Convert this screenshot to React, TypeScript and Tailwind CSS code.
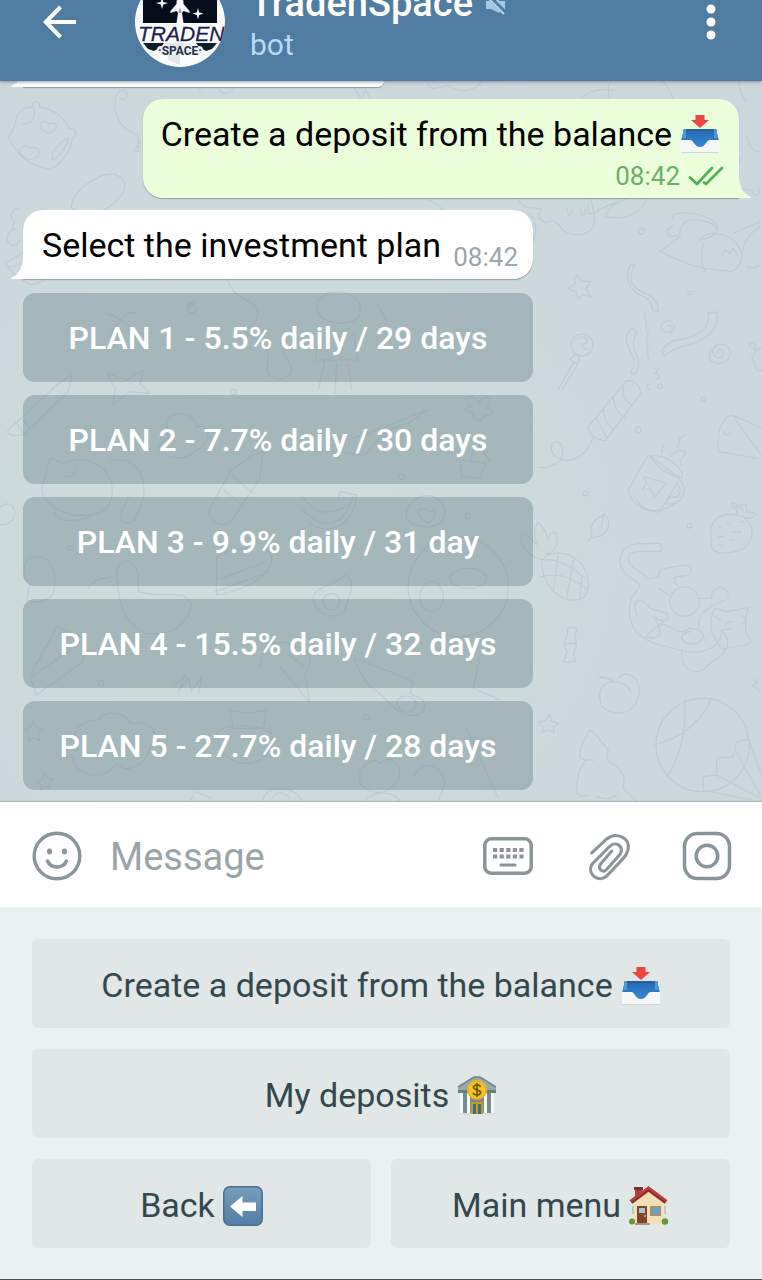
import type { ReactNode } from "react";

type IconProps = { className?: string };

function BackArrow() {
  return (
    <svg viewBox="0 0 34 34" className="size-[34px]" fill="none" stroke="#fff" strokeWidth="4">
      <path d="M33 17H3M17.500 2 2.800 17l14.700 15" />
    </svg>
  );
}

function Avatar() {
  return (
    <svg viewBox="0 0 90 90" className="size-[90px] shrink-0" role="img" aria-label="TradenSpace">
      <defs>
        <clipPath id="avatar-clip">
          <circle cx="45" cy="45" r="45" />
        </clipPath>
      </defs>
      <g clipPath="url(#avatar-clip)">
        <rect width="90" height="90" fill="#fbfdfd" />
        <rect x="8" y="0" width="74" height="46" fill="#060d1a" />
        <path d="M45 14c3 5 3.500 10 3.500 13l6 7v2l-6-2-1.500 2 1.500 10h-7l1.500-10-1.500-2-6 2v-2l6-7c0-3 .5-8 3.500-13z" fill="#f4f7fb" />
        <path d="M45 30l-1.500 6h3z" fill="#8d98a8" />
        <path d="M27 20l1.200 5 4.800 1-4.800 1.500-1.200 4.500-1.200-4.500-4.800-1.500 4.800-1zM63 31l1.200 4.500 4.300 1-4.300 1.500-1.200 4.500-1.200-4.500-4.300-1.500 4.300-1z" fill="#fff" />
        <path d="M8 66h21l-3 4-7 4-6-2zM61 66h21l-5 6-6 2-7-4z" fill="#0d2029" />
        <path d="M32 66h24l-11 4v18l-12-5z" fill="#e4e6ea" />
        <rect x="22" y="69" width="46" height="9" rx="4" fill="#eff1f4" />
        <text x="3" y="63.500" fontFamily="Liberation Sans, sans-serif" fontSize="21" fontStyle="italic" fill="#211d52" stroke="#211d52" strokeWidth=".3">
          TRADEN
        </text>
        <text x="45" y="78" textAnchor="middle" fontFamily="Roboto, sans-serif" fontWeight="700" fontSize="12" fill="#25304f">
          ·SPACE·
        </text>
      </g>
    </svg>
  );
}

function MutedIcon() {
  return (
    <svg viewBox="0 0 22 24" className="h-6 w-[22px]" aria-hidden="true">
      <path d="M1 9h5l8-7v7l6 0v8l-6 4-8-4H1z" fill="#a6c8e4" />
      <path d="M2 3l19 19" stroke="#4f7ca0" strokeWidth="5" />
      <path d="M3 6l16 16" stroke="#b5d5ee" strokeWidth="2" />
    </svg>
  );
}

function MenuDots() {
  return (
    <svg viewBox="0 0 10 36" className="h-9 w-[10px]" fill="#fff">
      <circle cx="5" cy="5" r="4.500" />
      <circle cx="5" cy="18" r="4.500" />
      <circle cx="5" cy="31" r="4.500" />
    </svg>
  );
}

function ChecksIcon() {
  return (
    <svg viewBox="0 0 36 20" className="h-5 w-9" fill="none" stroke="#52b152" strokeWidth="2.800" strokeLinecap="round" strokeLinejoin="round" aria-label="Read" role="img">
      <path d="M2 11.500l7 6.500L24 2M16 16.500l2 1.500L34 2" />
    </svg>
  );
}

function InboxEmoji({ className }: IconProps) {
  return (
    <svg viewBox="0 0 40 40" className={className} role="img" aria-label="Inbox tray">
      <defs>
        <linearGradient id="tray-blue" x1="0" y1="0" x2="0" y2="1">
          <stop offset="0" stopColor="#2368ae" />
          <stop offset="1" stopColor="#3b91dc" />
        </linearGradient>
      </defs>
      <path d="M4 15h32l3 12v9H1v-9z" fill="url(#tray-blue)" />
      <path d="M4 15h32l1 2H3z" fill="#265f9f" />
      <path d="M4 15h2v9H2zM36 15h-2v9h4z" fill="#5199d5" />
      <path d="M1 26h9c4 0 4 7 10 7s6-7 10-7h9v13H1z" fill="#f6f7f8" />
      <path d="M1 38.500h38" stroke="#cfd5da" />
      <path d="M15.500 1h9v5h4.500l-9 8-9-8h4.500z" fill="#ec4640" />
    </svg>
  );
}

function BankEmoji({ className }: IconProps) {
  return (
    <svg viewBox="0 0 40 40" className={className} role="img" aria-label="Bank">
      <path d="M3 15h34v23H3z" fill="#768c90" />
      <path d="M1 11 17 1h6l16 10v5H1z" fill="#98a9ac" />
      <path d="M1 11 17 1h6l16 10" fill="none" stroke="#728689" strokeWidth="1.500" />
      <path d="M1 14h38v3H1z" fill="#667d82" />
      <path d="M14 26h12v12H14z" fill="#c39b25" />
      <path d="M16 28h3v10h-3zM21 28h3v10h-3z" fill="#386e80" />
      <path d="M3 17h3v20H3zM10 17h3v20h-3zM27 17h3v20h-3zM34 17h3v20h-3z" fill="#f6f8f8" />
      <path d="M1 37h13v2H1zM26 37h13v2H26z" fill="#d9dfe0" />
      <circle cx="20" cy="14" r="10" fill="#f4c51f" />
      <circle cx="20" cy="14" r="9" fill="none" stroke="#dda91b" />
      <path d="M23.500 11c-1-3-7-2.500-7 .3 0 3.200 7.200 2 7.200 5.300 0 3-6.500 3.300-7.700.2M20 7v14" fill="none" stroke="#6c5710" strokeWidth="1.700" />
    </svg>
  );
}

function LeftEmoji({ className }: IconProps) {
  return (
    <svg viewBox="0 0 40 40" className={className} role="img" aria-label="Left arrow">
      <defs>
        <linearGradient id="key-blue" x1="0" y1="0" x2="0" y2="1">
          <stop offset="0" stopColor="#789dbb" />
          <stop offset="1" stopColor="#507fa6" />
        </linearGradient>
      </defs>
      <rect x=".8" y=".8" width="38.400" height="38.400" rx="6" fill="url(#key-blue)" stroke="#496f8e" strokeWidth="1.500" />
      <path d="M7 20.500 19.500 10v6.500H33v8.500H19.500V31z" fill="#fff" />
    </svg>
  );
}

function HouseEmoji({ className }: IconProps) {
  return (
    <svg viewBox="0 0 40 40" className={className} role="img" aria-label="House">
      <path d="M6 2h7v12H6z" fill="#a9443b" />
      <path d="M5 1h9v3H5z" fill="#7e302c" />
      <path d="M5 15 20 4l14 11v23H5z" fill="#f3dfb5" />
      <path d="M4 20v8M36 20v8" stroke="#a8c5c5" strokeWidth="1.500" />
      <path d="M2 16 19.500 3 37 16" fill="none" stroke="#7f2a2a" strokeWidth="4.500" />
      <path d="M2 15 19.500 2 37 15" fill="none" stroke="#c53d3b" strokeWidth="2.500" />
      <path d="M8 20h10v18H8z" fill="#80452f" />
      <path d="M10 22h6v5h-6z" fill="#a7c7d0" />
      <circle cx="16" cy="30" r="1" fill="#e6b850" />
      <path d="M21 20h11v10H21z" fill="#bd8b56" />
      <path d="M22.500 21.500h8v7h-8z" fill="#62a5d5" />
      <path d="M6 37h15v2H6z" fill="#a5958c" />
      <circle cx="3" cy="35.500" r="3" fill="#65963c" />
      <circle cx="36" cy="35.500" r="3.200" fill="#65963c" />
    </svg>
  );
}

function SmileIcon() {
  return (
    <svg viewBox="0 0 50 50" className="size-[50px]" fill="none" stroke="#8b9497" strokeWidth="3.500">
      <circle cx="25" cy="25" r="22.800" />
      <path d="M15.500 30c3.500 8 15.500 8 19 0" strokeLinecap="round" />
      <ellipse cx="17.500" cy="20.500" rx="2.600" ry="3" fill="#8b9497" stroke="none" />
      <ellipse cx="32.500" cy="20.500" rx="2.600" ry="3" fill="#8b9497" stroke="none" />
    </svg>
  );
}

function KeyboardIcon() {
  return (
    <svg viewBox="0 0 50 40" className="h-10 w-[50px]" fill="none" stroke="#8b9497">
      <rect x="1.800" y="2.800" width="46.400" height="34.400" rx="6.500" strokeWidth="3.500" />
      <path d="M10 14h31M10 20.500h31" strokeWidth="4.200" strokeDasharray="4.200 2.400" />
      <path d="M18 29h14" strokeWidth="3" strokeLinecap="round" />
    </svg>
  );
}

function ClipIcon() {
  return (
    <svg viewBox="0 0 44 50" className="h-[50px] w-11" fill="none" stroke="#8b9497" strokeWidth="3.200" strokeLinecap="round" strokeLinejoin="round">
      <path d="M4 21 20 6C29-1 45 4 42 18c-1 4-3 7-6 10L20 45C11 53-1 44 4 33L23 14c6-6 15 0 11 8L20 38c-4 5-10 0-7-5l12-14" transform="translate(1 2) scale(.95 .95)" />
    </svg>
  );
}

function CameraIcon() {
  return (
    <svg viewBox="0 0 50 50" className="size-[50px]" fill="none" stroke="#8b9497" strokeWidth="3.500">
      <rect x="2.500" y="2.500" width="45" height="45" rx="13" />
      <circle cx="25" cy="25" r="10.800" />
    </svg>
  );
}

/** Faint line drawings behind the conversation. */
function ChatWallpaper() {
  return (
    <svg
      viewBox="0 81 762 721"
      preserveAspectRatio="xMinYMin slice"
      className="absolute inset-0 size-full"
      fill="none"
      stroke="#bfcbd6"
      strokeWidth="3.500"
      strokeLinecap="round"
      strokeLinejoin="round"
      aria-hidden="true"
    >
      <g transform="translate(0 80) scale(.3333)">
        <path d="M25 170q20-20 25-60 20-35 50-28c-10-22 22-22 18-2 50 10 75 35 90 65 20 0 28 20 10 28-5 40-30 75-65 95-45-5-85-30-105-60-15-20-20-30-23-38z" />
        <path d="M145 160c-30-12-30-35-10-37 12 2 10 10 13 10 12-12 30 2 15 20zM85 240c-35-20-30-38-10-42 12 2 12 10 17 6 22-8 35 16 14 30zM65 130c30 5 40-10 38-45M155 240c0-30 25-55 50-65-10 35-25 55-50 65z" />
        <path d="M215 385c-5-30 30-70 75-90 60-35 110 10 70 55-35 45-90 65-145 35M345 80c0-25 5-50 25-50 20 10 10 35-8 25M345 80c5 50 35 75 70 85v50h-15l20-30" />
        <path d="M55 385c-30 10-25 30-10 40-15 20-5 25 8 25-20-5-45 20-25 40 20 20 35-10 28-12M600 35c-5-40 40-80 85-55 30 20 20 60-10 60-30-5-20-40 5-30M1060 20l25 40 12-30 20 35M1280-5c10 60 50 10 70 25 35 20 70 15 95-15M1830 60c-40-120 170-120 190 5M1740 60q35-40 100-30M2240 65c-30-30-30-100 0-105" />
        <path d="M2225 230c-10 35-30 45-35 50 12 5 18 20 20 60 15-10 35-20 48-5 10 20 25 10 20-10M2240 170q12 50 45 45" />
      </g>
      <g transform="translate(0 190) scale(.3333)">
        <path d="M15 220q80-40 135-115c60 55 60 150-55 180-35-15-65-40-80-65zM25 230q65 5 120-110" />
        <ellipse cx="113" cy="190" rx="9" ry="7" />
        <ellipse cx="155" cy="190" rx="9" ry="7" />
        <ellipse cx="88" cy="235" rx="10" ry="7" />
        <path d="M320 80c-5 70 15 110 65 135M335 95c20 60 130 80 160-15M385 165q45-15 85 0M495 80c70 30 80 95 55 130-30 30-70 15-60-15l10-40M795 105q20-15 60-20 20 15 40 20-15 20-45 15l-10 20-20-5 5-20q-20 0-30-10zM1010 105c0-40 110-40 115 35 40 10 10 40-20 30-15-10-30-40-15-40-20-20-50 10-80-25z" />
        <path d="M725 220c0-60 60-75 75-20-15 45-50 55-75 20zM700 240c-40 35 10 80 50 95 40 30 30 60-20 85 30 30 80 40 75 90-20 70 60 70 70 30 0-30-40-40-20-80M320 370c70 20 90 80 140 55M330 440c30-70 70-80 80-70M565 355c20-30 40 15 10 15-20-5-20-30 10-35M950 350c0-60 130-60 130 5 15 60-130 60-130-5zM960 430l-15 80h130l-15-80M975 510l-20 90m55-80-5 90m40-90 10 80M1130 340l30 50M1280 30c70 10 60 90 10 85-30-5-20-45 5-40" />
      </g>
      <g transform="translate(500 190) scale(.3333)">
        <path d="M55 28c15 35 50 20 70 30-15 20-15 30 15 40 20-12 40 5 45 20 35 25 80 20 95-10 10-25 0-45-10-85M200 55l8 25 10-22M240 55l8 25 10-22M265 40c-5 65 15 15 80 0 40-15 70-30 95-10-30 50-70 60-125 50 15-30 30-40 55-50M480 185l60-45c-5-45 25-60 80-45 60 20 15 50-20 55 20-35 95-20 115 20 20 20 10 60-20 75l-80-10c-60-10-100-35-135-50zM520 90c-20-40 130-20 133 25M520 105c-30 20-20 45 15 30M610 160q-10 50 5 85M665 200l10-20 15 10 10-15 15 25M700 130l80-35M730 180q0-35 50-70M740 230q30 10 35-5" />
        <path d="M230 252l15 22 28 0-15 23 15 22-25-5-13 14-8-23-25-10 23-12zM405 225c-20 35-20 60 20 80 35 15 48 25 50 60l-16-2c-5-35-20-40-45-52-40-25-35-55-22-88zM625 368l27-2c5 45-20 70-60 90-35 15-75 15-96 42l-12-13c15-30 40-35 76-40 50-15 70-35 65-77zM398 413l13 15c-25 35 0 60 5 90 0 30-10 35-20 35l-5-10c15-10 15-30 5-50-20-30-25-60 2-80zM437 368c-15 20 15 30 0 48 20 20-10 35 8 52-15 15 8 25-2 45M503 410c10-15 25 15 2 18-25 0-30-28-5-35 25-5 35 30 12 35M655 492c-10-20 20-20 15 5-15 20-50-10-20-32 50-15 60 55 0 55-30-5-30-40 0-50" />
        <circle cx="246" cy="465" r="33" />
        <path d="M225 450q20-15 35-5 10 15-15 18-5 12 20 14M228 492l10 8v15l-12 5-16-12zM222 515l-48 85M235 520l-50 80M265 710l115-138c25 0 40 15 43 38L315 753c-35-5-48-20-50-43zM290 685l30 57M310 655q0 40 32 65M340 620q0 40 35 65M370 590q-5 40 28 55M278 745c-35 100-145 70-120 15 30-25 50 55 0 65q-20 10-40 7M460 537h17l-12 15c20 0 15 15 5 15M452 583h-12l8 17h-10" />
        <circle cx="481" cy="589" r="7" />
        <circle cx="424" cy="124" r="9" />
        <circle cx="415" cy="720" r="9" />
        <circle cx="257" cy="910" r="7" />
        <circle cx="569" cy="309" r="6" />
        <circle cx="610" cy="628" r="7" />
        <path d="M445 795l95 70-60 100c-50 5-90-30-95-65zM450 798c60-10 110 55 95 65-50-10-75-35-95-65zM540 870c30 35 0 85-45 70l15-20c25 10 40-15 25-35M430 860l70 20-35 40-15-25-25 5 15-20zM510 800l25-20 20 5c5 20-25 20-10 40M555 735c-30 10-10 30-25 40M485 790l5-25M655 785c-5-80 20-110 45-108 50 20 100 40 130 80M655 785l120 20M700 680l110 150M670 725c5 15 20 10 25 0M765 465c-10-15-25 0-10 10 15 5 15 0 10-10zM760 500q0-20 25-25M755 500l15 40q25 5 30-15M695 940l8 18 12-15 15 20M0 80c35 10 30 50 0 50M85 70c45 40 20 100-50 190" />
      </g>
      <g transform="translate(500 500) scale(.3333)">
        <path d="M125 180c35-35 90-25 125 20 30 55 10 100-20 100-60 5-105-50-105-120zM125 180q60-10 130 55M125 230q70-20 138 40M175 165l-15 105M220 180l-20 115M245 230l-5 70M125 180c-65-20-70-75-60-80 15 0 30 15 45 35-10-35-5-60 5-65 15 10 25 25 27 50 10-25 25-35 30-5 0 30-20 50-35 45M263 122c15-10 15-15 10-30 0-25 20-40 40-48 25 20 10 55-15 65-15 5-25 0-35 13zM313 40l-10 45M632 100c0-30 20-65 75-55 60 10 60 70 25 100-40 20-90 20-97-5zM695 10c20 0 15 10 15 35 5-35 35-50 30-10 40 0 30 30-15 15" />
        <path d="M440 235c-10-25-55-25-55-60 0-20 25-25 95-20 10-10 5-25-5-25-65 0-110-5-115 50 0 45 35 50 60 75 0 10-15 20-25 40-20 65 5 120 85 140l60 15c30 10 65 10 100-10 20-10 25-30 25-50 20 20 30 50-5 80-30 15-45 45-70 45-40-5-45-30-45-60M440 235h15l20-5 5-20c40-10 65-15 80-15 15 5 20 20 5 30-15 5-25 0-45 10l10 20M475 265l32 20M410 345c-20-60 25-50 40-20l50 15c15 25-10 30-40 10M440 405l50-40M435 410c65 20 45-35 30-50M480 375c30-10 50 40 90 10 50 5 50 30 20 45-55 10-60-35-15-35M600 295h35c-5-35 45-45 50-10-5 30-45 15-55 40-25 10-35 30-35 60M645 325l35 10 65-12c-10 30-10 60-5 85 20 10 15 30-25 30l-50 10-30-50c-5-35 0-60 10-73zM645 350l15 8M680 370l15-5M670 390l25-5M725 350l15 5-10 15" />
        <circle cx="554" cy="305" r="44" />
        <path d="M203 388c5-10 25-5 28 0l-8 20c8 10 8 35-2 50l5 25c-15 5-30 5-36 0l12-25c-10-15-10-40 0-50zM195 430h30M355 535c10-20 55-20 63 30 0 85-85 90-115 50-15-60 15-70 45-70 20 0 35 15 45 30M340 545c-20-15-35-5-42-15 20 0 35 0 42 15zM150 643l5 20 20 8-15 10 2 17-20-8-15 8 3-18-14-13 20-5zM268 690c25 10 35 40 57 60-10 20-5 35 10 40 50 30 35 60 35 75l40 40M268 690c-10 25-30 45-30 80 10 15 30 10 45 10M255 785c-25 30-25 70-25 95l15 10 20-5M290 890q40 15 60-5M763 540l10 15M775 535l-5 15-12 5 14 12 8 10" />
        <circle cx="608" cy="735" r="140" />
        <path d="M555 600c5 90-15 175-55 230M460 735q120-25 175-140M610 865v-35l40-5v-50l50-5 10-45 35-5M650 825l150 80M710 760l80 140M740 705l60 160M605 870l150 30M410 0c30 50 90 35 135-5" />
        <circle cx="568" cy="77" r="7" />
        <path d="M655 80h10m15-10h8m10 25h10m15-30h8m-75 45h12m20 10h10m15-25h10m-70 40h12" />
      </g>
      <g transform="translate(0 380) scale(.3333)">
        <path d="M25 150 170 15l45-30-10 50L70 165c-45 5-50-5-45-15zM50 130l20 30M65 115l25 30M320-20l60 20 50-30-10 40 30 30-60-5-50 40 5-50zM500 120c20-30 85-25 90 20 50-10 40 60 0 70-40 45-110 15-115-5 5-15 15-25 30-30zM150 235l40 15c90-40 180 40 135 130-70 60-200 10-200-55zM330 245c90-30 130 80 80 160-15 45-60 20-45-10l20-45M165 395c0 40 90 30 120 5M190 285c30 20 35-15 40-25M690 275l60-45 40-15-10 80-80 120c-20 40-85 10-70-30zM690 280l70 60M670 330l65 50M910 350c30 55 85 60 140 20M905 385c60 70 125 60 155-35M925 425c60 50 140 10 145-80l-50-10-5 20M1220 420c-10-90 110-95 115-25 0 50-60 50-90 40zM1285 430c-60-40-15-55 0-35 35-15 20 25 0 35zM1380 240l80 10-20 45-55-5zM1410 245l20-60 40 60M1400 70c-10-30 30-25 35 0 20-30 50-20 25 15 30 5 20 25-5 20-10 25-40 20-35-5-35-5-25-20 0-20zM960 210l170-60 40-15 110-45-55 40-70 25-60 70z" />
        <path d="M0 380c30-20 45 0 45 25-10 30-35 30-45 30M80 540c60-35 100 30 80 100-20 30-50 30-80 20l10-50q-30-20-10-70zM265 625c20-40 70-25 80-40M350 575c10-50 65-40 65 20v40c65 20 120 0 140 15l20 20c-10 70-70 100-140 90-80-40-80-120-85-185M650 530c30-20 120-40 160-15 25 45-40 110-160 130zM650 600l150-55M645 635l165-60M1040 585c30 20 5 70-5 105-20 35-90 15-95-30-5-35 50-40 100-75z" />
        <circle cx="995" cy="665" r="25" />
        <circle cx="1375" cy="620" r="150" />
        <ellipse cx="1295" cy="650" rx="35" ry="45" />
        <ellipse cx="1405" cy="595" rx="55" ry="30" />
        <path d="M90 890l80-150 85 35-5 70-140 100zM95 890l160-110M520 920l35-35-20 50 30-40 10 40 30-45-10 50M780 860c0-60 50-95 100-60 70 0 50 70 35 80l15 90-90-110M860 820l55 40M1060 835l110 40 70 30-10 35 40 20c20 50-50 60-80 30l-40-40-50-40zM1190 970c0-30 60-30 60 5-20 35-50 25-60-5zM1440 830l-20 95 80 35M235 1110c-30-60 10-90 60-90 20-35 90-20 95 10 70-10 90 30 60 70-10 60-80 85-100 50-50 70-140 20-130-20-30 10-40-10-30-25zM690 990l50 10 60-10-10 55H700zM650 1060c30-35 140-25 165 0 20 110-155 130-165 0zM100 1025l10 18 20 5-15 15 5 20-20-10-15 10 2-20-15-15 20-5zM135 1180l8 14 17 5-13 13 3 15-15-6-13 9 1-16-12-12 16-5zM1080 1210c-10-60 45-80 60-60 30-30 70 0 55 50-30 45-80 50-115 10zM1240 1190c35-60 90-30 95 20l-20 55M1400 1045l95 210M790 1265c-5-45 90-60 115 0M820 1255c0-25 50-20 50 10M570 1265l15-30 50 20M1100 1265c5-30 80-40 100 0" />
        <circle cx="700" cy="36" r="8" />
        <circle cx="1205" cy="290" r="8" />
        <circle cx="1403" cy="408" r="8" />
        <circle cx="303" cy="910" r="8" />
        <circle cx="1100" cy="1012" r="8" />
        <circle cx="210" cy="505" r="7" />
      </g>
    </svg>
  );
}

function LeftTail() {
  return (
    <svg viewBox="0 0 24 24" className="absolute -left-3 bottom-0 size-6" fill="#fff" aria-hidden="true">
      <path d="M24 24H1c-1 0-1-1 0-1.500C9 19 12 11 12 0h12z" />
    </svg>
  );
}

function RightTail() {
  return (
    <svg viewBox="0 0 24 24" className="absolute -right-3 bottom-0 size-6" fill="#ebffda" aria-hidden="true">
      <path d="M0 24h23c1 0 1-1 0-1.500C15 19 12 11 12 0H0z" />
    </svg>
  );
}

const plans = [
  "PLAN 1 - 5.5% daily / 29 days",
  "PLAN 2 - 7.7% daily / 30 days",
  "PLAN 3 - 9.9% daily / 31 day",
  "PLAN 4 - 15.5% daily / 32 days",
  "PLAN 5 - 27.7% daily / 28 days",
];

function ReplyKey({ children }: { children: ReactNode }) {
  return (
    <button type="button" className="flex h-[89px] flex-1 items-center justify-center gap-2 rounded-md bg-[#e1e7e6] pt-1 text-[34px] text-[#32474e]">
      {children}
    </button>
  );
}

export default function App() {
  return (
    <div className="flex min-h-screen flex-col overflow-hidden bg-[#ebf0f0] font-[Roboto,sans-serif]">
      <header className="relative z-10 bg-[#4f7ca0] pb-[37px] shadow-[0_1px_3px_rgba(60,80,90,0.5)]">
        <div className="flex h-11 items-center pr-[46px] pl-[43px]">
          <button type="button" aria-label="Back">
            <BackArrow />
          </button>
          <div className="ml-[58px] shrink-0">
            <Avatar />
          </div>
          <div className="ml-[25px] flex-1 pt-1 leading-[41px]">
            <h1 className="flex items-center gap-3 text-[38px] font-medium text-white">
              TradenSpace
              <MutedIcon />
            </h1>
            <p className="text-[30px] text-[#b8d9f2]">bot</p>
          </div>
          <button type="button" aria-label="More options">
            <MenuDots />
          </button>
        </div>
      </header>

      <main className="relative bg-[#cdd8dc] bg-[radial-gradient(ellipse_at_35%_65%,#ceddda_0%,#cdd9dc_50%,#ccd6dd_100%)] px-[23px] pb-3">
        <ChatWallpaper />
        <div className="relative flex flex-col">
          <div className="relative h-1.5 w-[361px] rounded-br-2xl bg-[#fbfbfa] shadow-[0_1px_1px_rgba(110,135,145,0.7)]">
            <svg viewBox="0 0 12 6" className="absolute top-0 -left-3 h-1.5 w-3" fill="#fbfbfa" aria-hidden="true">
              <path d="M12 6H1C0 6 0 5 1 4.500Q5 3 7 0h5z" />
            </svg>
          </div>

          <div className="relative mt-3 self-end rounded-[20px] rounded-br-none bg-[#ebffda] pt-[14px] pr-[15px] pb-[5px] pl-[18px] shadow-[0_1px_1px_rgba(110,135,145,0.7)]">
            <RightTail />
            <p className="relative flex items-center gap-2 pr-1 text-[34px] leading-[42px] text-black">
              Create a deposit from the balance
              <InboxEmoji className="size-10" />
            </p>
            <p className="relative flex items-center justify-end gap-2 pt-1 text-[26px] leading-[34px] text-[#6cb066]">
              08:42
              <ChecksIcon />
            </p>
          </div>

          <div className="relative mt-3 flex w-[510px] items-end justify-between rounded-[20px] rounded-bl-none bg-white pt-[14px] pr-[15px] pb-[13px] pl-[19px] shadow-[0_1px_1px_rgba(110,135,145,0.7)]">
            <LeftTail />
            <p className="relative text-[34px] leading-[42px] text-black">Select the investment plan</p>
            <p className="text-[26px] leading-[18px] text-[#9ba6ad]">08:42</p>
          </div>

          <div className="mt-[14px] flex w-[510px] flex-col gap-[13px]">
            {plans.map((plan) => (
              <button key={plan} type="button" className="h-[89px] rounded-xl bg-[rgba(102,130,140,0.4)] text-[32px] font-medium text-white">
                {plan}
              </button>
            ))}
          </div>
        </div>
      </main>

      <form className="relative flex h-[105px] items-center bg-white pt-0.5 pr-[30px] pl-8 shadow-[0_-1px_1px_rgba(150,165,170,0.6)]" onSubmit={(event) => event.preventDefault()}>
        <button type="button" aria-label="Emoji">
          <SmileIcon />
        </button>
        <input aria-label="Message" placeholder="Message" className="ml-[28px] min-w-0 flex-1 bg-transparent pt-1 text-[38px] text-black outline-none placeholder:text-[#9aa5a7]" />
        <button type="button" aria-label="Bot keyboard">
          <KeyboardIcon />
        </button>
        <button type="button" aria-label="Attach" className="ml-[54px]">
          <ClipIcon />
        </button>
        <button type="button" aria-label="Camera" className="ml-[51px]">
          <CameraIcon />
        </button>
      </form>

      <section aria-label="Bot keyboard" className="flex flex-1 flex-col gap-[21px] border-b border-[#4b5152] px-8 pt-8 pb-[31px]">
        <div className="flex">
          <ReplyKey>
            Create a deposit from the balance
            <InboxEmoji className="size-10" />
          </ReplyKey>
        </div>
        <div className="flex">
          <ReplyKey>
            My deposits
            <BankEmoji className="size-10" />
          </ReplyKey>
        </div>
        <div className="flex gap-5">
          <ReplyKey>
            Back
            <LeftEmoji className="size-10" />
          </ReplyKey>
          <ReplyKey>
            Main menu
            <HouseEmoji className="size-10" />
          </ReplyKey>
        </div>
      </section>
    </div>
  );
}
